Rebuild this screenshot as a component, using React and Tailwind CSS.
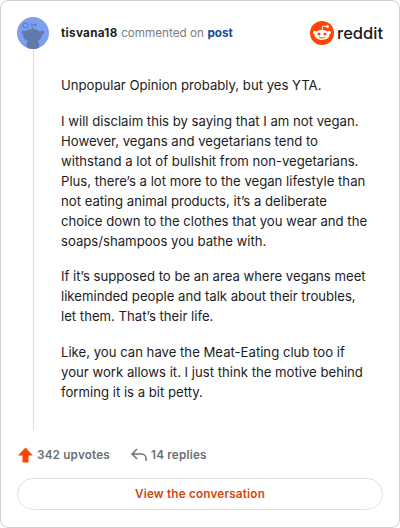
const para = "mb-[15.6px]";
export default function App() {
  return (
    <div className="w-[400px] h-[528px] bg-white border border-[#d0d0d0] rounded-[8px] text-[#1c1c1c] flex flex-col pt-[16px] pl-[16px] pr-[16px] font-[family-name:Inter,sans-serif]">
      <div className="flex flex-1 min-h-0">
        <div className="w-[32px] flex flex-col items-center shrink-0">
          <svg width="32" height="32" viewBox="0 0 32 32" className="shrink-0">
            <defs><clipPath id="c"><circle cx="16" cy="16" r="16" /></clipPath></defs>
            <circle cx="16" cy="16" r="16" fill="#7e9ff0" />
            <g clipPath="url(#c)" fill="#5f7aab">
              <circle cx="8.5" cy="8.5" r="2.5" fill="#7e9ff0" stroke="#5f7aab" strokeWidth="1" />
              <path d="M16 13 L14.5 7 L18 8" fill="none" stroke="#5f7aab" strokeWidth="0.9" />
              <circle cx="18.5" cy="8" r="1.1" />
              <ellipse cx="15.5" cy="18.5" rx="9.5" ry="6.5" />
              <ellipse cx="16" cy="28" rx="6.5" ry="5.5" />
              <circle cx="6.5" cy="15.5" r="2" />
              <circle cx="25" cy="15.5" r="2" />
            </g>
          </svg>
          <div className="w-px flex-1 bg-[#dcdcdc]" />
        </div>
        <div className="flex-1 pl-[12px] min-w-0">
          <div className="h-[32px] flex items-center justify-between">
            <div className="flex items-center text-[11.7px] leading-none pt-[2px]">
              <span className="font-bold text-[#1c1c1c] tracking-[0.3px]">tisvana18</span>
              <span className="text-[#787c7e] ml-[3.5px]">commented on</span>
              <span className="font-bold text-[#0f4c9a] ml-[3.5px]">post</span>
            </div>
            <div className="flex items-center">
              <svg width="24" height="24" viewBox="0 0 24 24">
                <circle cx="12" cy="12" r="12" fill="#ff4500" />
                <ellipse cx="12" cy="14" rx="7.5" ry="5" fill="#fff" />
                <circle cx="4.8" cy="11.5" r="1.7" fill="#fff" />
                <circle cx="19.2" cy="11.5" r="1.7" fill="#fff" />
                <circle cx="17.5" cy="5.5" r="1.5" fill="#fff" />
                <path d="M12 9 L12.8 5 L17 5.5" stroke="#fff" strokeWidth="0.9" fill="none" />
                <circle cx="9" cy="13.2" r="1.4" fill="#ff4500" />
                <circle cx="15" cy="13.2" r="1.4" fill="#ff4500" />
                <path d="M9 16.2 Q12 18 15 16.2" stroke="#ff4500" strokeWidth="0.9" fill="none" />
              </svg>
              <span className="ml-[3px] text-[16.5px] leading-none font-medium text-[#1a1a1b]">reddit</span>
            </div>
          </div>
          <div className="pt-[26px] text-[13.15px] leading-[20px] pr-[13px]">
            <p className={para}>Unpopular Opinion probably, but yes YTA.</p>
            <p className={para}>I will disclaim this by saying that I am not vegan. However, vegans and vegetarians tend to withstand a lot of bullshit from non-vegetarians. Plus, there’s a lot more to the vegan lifestyle than not eating animal products, it’s a deliberate choice down to the clothes that you wear and the soaps/shampoos you bathe with.</p>
            <p className={para}>If it’s supposed to be an area where vegans meet likeminded people and talk about their troubles, let them. That’s their life.</p>
            <p className={para}>Like, you can have the Meat-Eating club too if your work allows it. I just think the motive behind forming it is a bit petty.</p>
          </div>
        </div>
      </div>
      <div className="flex items-center h-[30px] mt-[10px] text-[11.7px] font-semibold text-[#6b7073] tracking-[0.2px]">
        <svg className="ml-[1px]" width="15" height="16" viewBox="0 0 15 16"><path d="M7.5 0.5 L15 8.5 H10.5 V15.5 H4.5 V8.5 H0 Z" fill="#ff4500" /></svg>
        <span className="ml-[4px] pt-[2px]">342 upvotes</span>
        <svg className="ml-[21px]" width="16" height="14" viewBox="0 0 16 14" fill="none" stroke="#6b7073" strokeWidth="1.5"><path d="M6 1 L1 6 L6 11 M1 6 H10.5 C13 6 15 8 15 10.5 V13" /></svg>
        <span className="ml-[4px] pt-[2px]">14 replies</span>
      </div>
      <div className="h-[32px] mt-[8px] mb-[17px] pt-[2px] rounded-full border border-[#e0e0e0] flex items-center justify-center text-[11.7px] font-semibold text-[#d4460e] tracking-[0.2px]">View the conversation</div>
    </div>
  );
}
